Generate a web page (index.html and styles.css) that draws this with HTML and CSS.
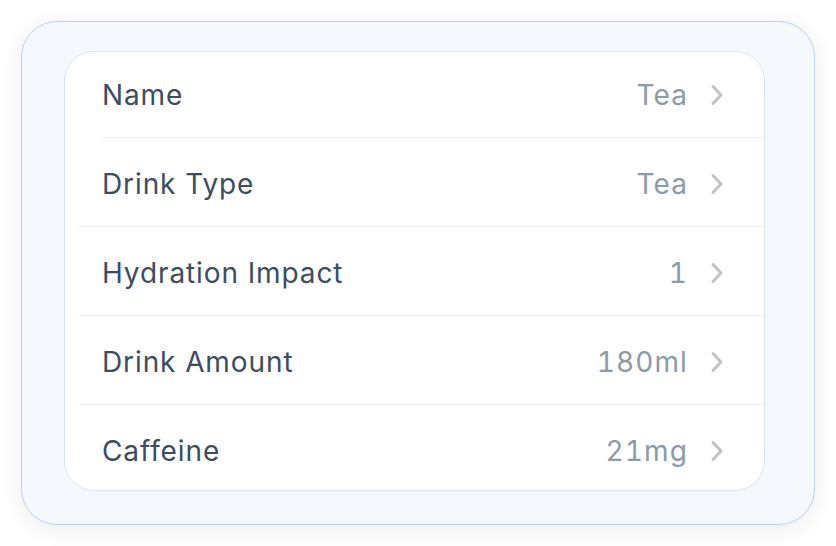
FILE: index.html
```html
<!DOCTYPE html>
<html>
<head>
<meta charset="utf-8">
<link rel="stylesheet" href="styles.css">
</head>
<body>
<div class="panel">
  <div class="card">
    <div class="row row-first">
      <span class="label">Name</span>
      <span class="value">Tea</span>
      <svg class="chev" viewBox="0 0 14 22" width="14" height="22"><polyline points="3,2.5 11,11 3,19.5" fill="none" stroke="#c2c2c2" stroke-width="3" stroke-linecap="round" stroke-linejoin="round"/></svg>
    </div>
    <div class="sep sep-inset"></div>
    <div class="row">
      <span class="label">Drink Type</span>
      <span class="value">Tea</span>
      <svg class="chev" viewBox="0 0 14 22" width="14" height="22"><polyline points="3,2.5 11,11 3,19.5" fill="none" stroke="#c2c2c2" stroke-width="3" stroke-linecap="round" stroke-linejoin="round"/></svg>
    </div>
    <div class="sep"></div>
    <div class="row">
      <span class="label">Hydration Impact</span>
      <span class="value">1</span>
      <svg class="chev" viewBox="0 0 14 22" width="14" height="22"><polyline points="3,2.5 11,11 3,19.5" fill="none" stroke="#c2c2c2" stroke-width="3" stroke-linecap="round" stroke-linejoin="round"/></svg>
    </div>
    <div class="sep"></div>
    <div class="row">
      <span class="label">Drink Amount</span>
      <span class="value">180ml</span>
      <svg class="chev" viewBox="0 0 14 22" width="14" height="22"><polyline points="3,2.5 11,11 3,19.5" fill="none" stroke="#c2c2c2" stroke-width="3" stroke-linecap="round" stroke-linejoin="round"/></svg>
    </div>
    <div class="sep"></div>
    <div class="row row-last">
      <span class="label">Caffeine</span>
      <span class="value">21mg</span>
      <svg class="chev" viewBox="0 0 14 22" width="14" height="22"><polyline points="3,2.5 11,11 3,19.5" fill="none" stroke="#c2c2c2" stroke-width="3" stroke-linecap="round" stroke-linejoin="round"/></svg>
    </div>
  </div>
</div>
</body>
</html>
```
FILE: styles.css
```css
html, body {
  margin: 0;
  padding: 0;
  background: #ffffff;
}
body {
  padding: 21px;
  font-family: Inter, "Noto Sans", sans-serif;
}
.panel {
  width: 794px;
  height: 504px;
  box-sizing: border-box;
  background: #f5f8fd;
  border: 1.5px solid #bcd1ec;
  border-radius: 36px;
  box-shadow: 0 4px 22px rgba(0, 0, 0, 0.08);
  padding: 29px 49px 33px 42px;
}
.card {
  height: 100%;
  box-sizing: border-box;
  background: #ffffff;
  border: 1.5px solid #dae5f3;
  border-radius: 30px;
  display: flex;
  flex-direction: column;
  overflow: hidden;
}
.row {
  height: 88px;
  box-sizing: border-box;
  flex: none;
  display: flex;
  align-items: center;
  padding: 3px 40px 0 37px;
}
.row-first { height: 85px; padding-top: 0; }
.row-last { height: 86px; padding-top: 5px; }
.label {
  flex: 1;
  font-size: 28px;
  color: #3e4c62;
  letter-spacing: 0.9px;
}
.value {
  font-size: 28px;
  color: #8c9aa9;
  letter-spacing: 1.1px;
  font-variant-numeric: tabular-nums;
  margin-right: 22px;
}
.chev {
  display: block;
}
.sep {
  height: 1px;
  flex: none;
  background: #edf1f7;
  margin-left: 13px;
}
.sep-inset {
  margin-left: 37px;
}
```
